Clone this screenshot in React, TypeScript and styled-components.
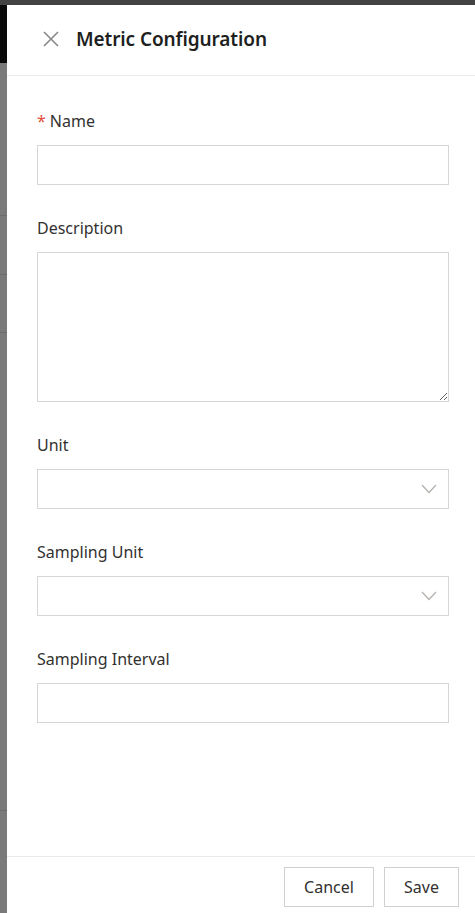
import React, { useState } from "react";
import styled, { createGlobalStyle } from "styled-components";

const GlobalStyle = createGlobalStyle`
  html, body {
    margin: 0;
    padding: 0;
    background: #ffffff;
  }
  * {
    box-sizing: border-box;
  }
`;

const Page = styled.div`
  display: flex;
  flex-direction: column;
  height: 913px;
  font-family: "Noto Sans", "Open Sans", sans-serif;
  color: #323130;
`;

const TopBar = styled.div`
  height: 5px;
  background: #434343;
`;

const Body = styled.div`
  flex: 1;
  display: flex;
  min-height: 0;
`;

const Backdrop = styled.div`
  width: 7px;
  display: flex;
  flex-direction: column;
  background: #7a7a7a;
`;

const BackdropBlock = styled.div<{ $height: number; $dark?: boolean }>`
  height: ${(p) => p.$height}px;
  background: ${(p) => (p.$dark ? "#0a0a0a" : "#7a7a7a")};
  border-bottom: ${(p) => (p.$dark ? "none" : "1px solid #6c6c6c")};
`;

const Panel = styled.div`
  flex: 1;
  display: flex;
  flex-direction: column;
  background: #ffffff;
`;

const Header = styled.div`
  height: 71px;
  display: flex;
  align-items: center;
  gap: 17px;
  padding: 0 0 2px 36px;
  border-bottom: 1px solid #edebe9;
`;

const CloseButton = styled.button`
  width: 16px;
  height: 16px;
  padding: 0;
  border: none;
  background: none;
  display: flex;
  cursor: pointer;
`;

const Title = styled.h2`
  margin: 0;
  font-size: 19px;
  font-weight: 600;
  letter-spacing: -0.1px;
  color: #201f1e;
`;

const Content = styled.form`
  flex: 1;
  display: flex;
  flex-direction: column;
  gap: 32px;
  padding: 34px 26px 0 30px;
`;

const Field = styled.div`
  display: flex;
  flex-direction: column;
`;

const Label = styled.label`
  font-size: 16px;
  line-height: 22px;
  margin-bottom: 13px;
  color: #323130;
`;

const Required = styled.span`
  color: #e04b3a;
  margin-right: 4px;
`;

const TextInput = styled.input`
  height: 40px;
  border: 1px solid #d6d6d6;
  padding: 0 10px;
  font: inherit;
  font-size: 15px;
  outline: none;
`;

const TextArea = styled.textarea`
  display: block;
  height: 150px;
  border: 1px solid #d6d6d6;
  padding: 8px 10px;
  font: inherit;
  font-size: 15px;
  resize: vertical;
  outline: none;
`;

const SelectBox = styled.div`
  height: 40px;
  border: 1px solid #d6d6d6;
  display: flex;
  align-items: center;
  justify-content: flex-end;
  padding: 0 11px 0 10px;
  cursor: pointer;
`;

const Footer = styled.div`
  display: flex;
  justify-content: flex-end;
  gap: 10px;
  padding: 10px 16px 6px;
  border-top: 1px solid #edebe9;
`;

const Button = styled.button<{ $width: number }>`
  width: ${(p) => p.$width}px;
  height: 40px;
  background: #ffffff;
  border: 1px solid #d2d0ce;
  font-family: inherit;
  font-size: 16px;
  color: #323130;
  cursor: pointer;
`;

const CloseIcon = () => (
  <svg width="16" height="16" viewBox="0 0 16 16">
    <path d="M1 1 L15 15 M15 1 L1 15" stroke="#8a8886" strokeWidth="1.6" fill="none" />
  </svg>
);

const Chevron = () => (
  <svg width="16" height="10" viewBox="0 0 16 10">
    <path d="M1 1 L8 8.5 L15 1" stroke="#b3b0ad" strokeWidth="1.2" fill="none" />
  </svg>
);

const App: React.FC = () => {
  const [name, setName] = useState("");
  const [description, setDescription] = useState("");
  const [interval, setInterval] = useState("");

  return (
    <>
      <GlobalStyle />
      <Page>
        <TopBar />
        <Body>
          <Backdrop>
            <BackdropBlock $height={58} $dark />
            <BackdropBlock $height={153} />
            <BackdropBlock $height={59} />
            <BackdropBlock $height={58} />
            <BackdropBlock $height={478} />
          </Backdrop>
          <Panel>
            <Header>
              <CloseButton aria-label="Close">
                <CloseIcon />
              </CloseButton>
              <Title>Metric Configuration</Title>
            </Header>

            <Content onSubmit={(e) => e.preventDefault()}>
              <Field>
                <Label>
                  <Required>*</Required>Name
                </Label>
                <TextInput value={name} onChange={(e) => setName(e.target.value)} />
              </Field>

              <Field>
                <Label>Description</Label>
                <TextArea
                  value={description}
                  onChange={(e) => setDescription(e.target.value)}
                />
              </Field>

              <Field>
                <Label>Unit</Label>
                <SelectBox>
                  <Chevron />
                </SelectBox>
              </Field>

              <Field>
                <Label>Sampling Unit</Label>
                <SelectBox>
                  <Chevron />
                </SelectBox>
              </Field>

              <Field>
                <Label>Sampling Interval</Label>
                <TextInput
                  value={interval}
                  onChange={(e) => setInterval(e.target.value)}
                />
              </Field>
            </Content>

            <Footer>
              <Button $width={90}>Cancel</Button>
              <Button $width={75}>Save</Button>
            </Footer>
          </Panel>
        </Body>
      </Page>
    </>
  );
};

export default App;
